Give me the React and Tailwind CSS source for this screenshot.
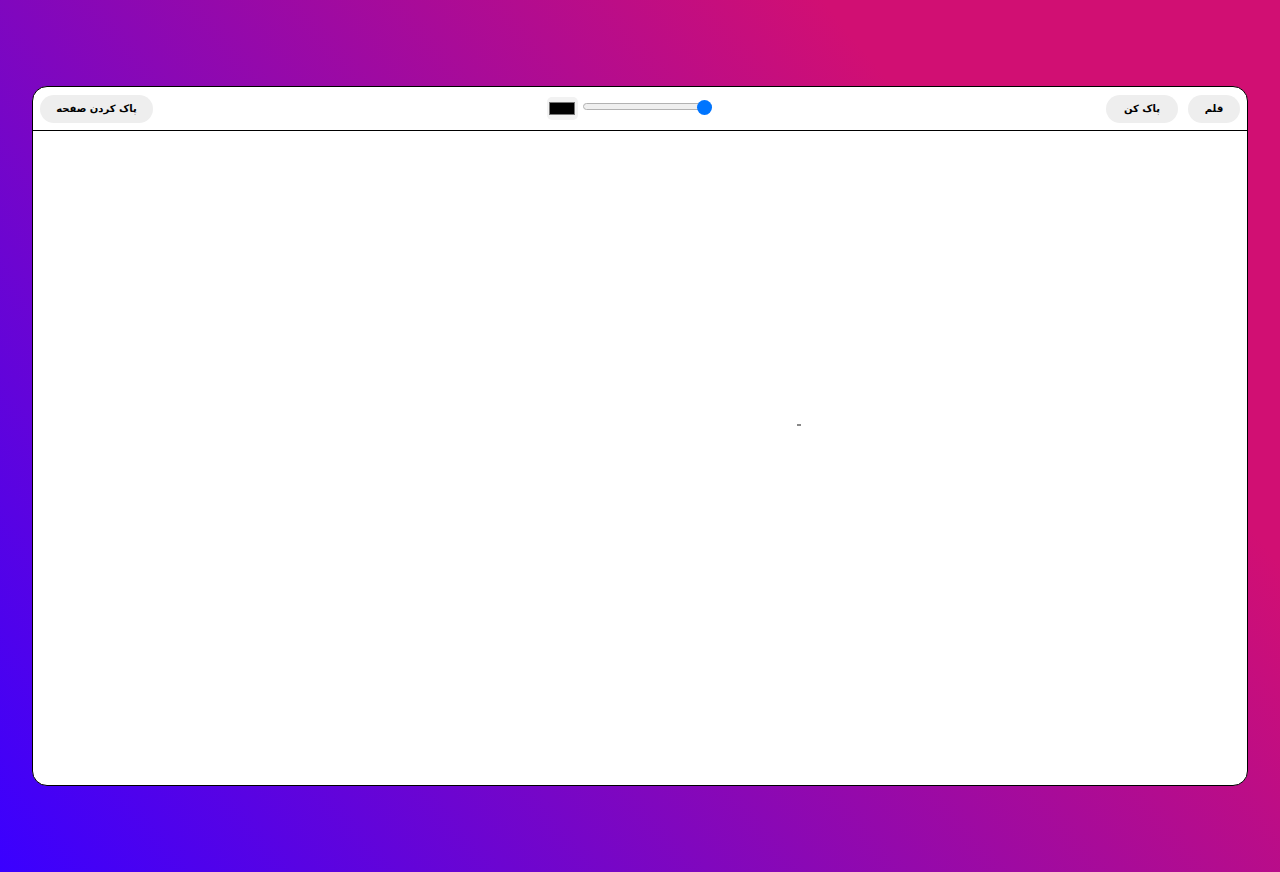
import React from "react";

export default function App() {
  return (
    <div
      className="w-full h-[872px] flex items-center justify-center bg-[linear-gradient(51deg,#3a00ff_0%,#d10f73_77%,#d10f73_100%)]"
      style={{ fontFamily: '"DejaVu Sans", "Liberation Sans", sans-serif' }}
    >
      <div className="w-[1216px] h-[700px] bg-white border border-black rounded-[15px] overflow-hidden flex flex-col">
        <div dir="rtl" className="h-[44px] shrink-0 border-b border-black flex items-center justify-between px-[7px]">
          <div className="flex items-center gap-[10px]">
            <button className="h-[28px] w-[52px] rounded-full bg-[#eeeeee] text-[10px] font-bold text-black">قلم</button>
            <button className="h-[28px] w-[72px] rounded-full bg-[#eeeeee] text-[10px] font-bold text-black">پاک کن</button>
          </div>
          <div dir="ltr" className="flex items-center gap-[5px] -translate-y-[2px] ml-[-1px]">
            <div className="w-[31px] h-[23px] rounded-[5px] bg-[#f2f2f2] flex items-center justify-center translate-y-[2px]">
              <div className="w-[26px] h-[13px] bg-black border border-[#777]" />
            </div>
            <div className="relative w-[129px] h-[16px] flex items-center">
              <div className="w-full h-[7px] rounded-full bg-[#efefef] border border-[#b2b2b2]" />
              <div className="absolute right-0 top-[1px] w-[15px] h-[15px] rounded-full bg-[#0075ff]" />
            </div>
          </div>
          <button className="h-[28px] w-[113px] rounded-full bg-[#eeeeee] text-[10px] font-bold text-black">پاک کردن صفحه</button>
        </div>
        <div className="relative flex-1">
          <div className="absolute left-[764px] top-[293px] w-[4px] h-[2px] bg-[#888]" />
        </div>
      </div>
    </div>
  );
}
